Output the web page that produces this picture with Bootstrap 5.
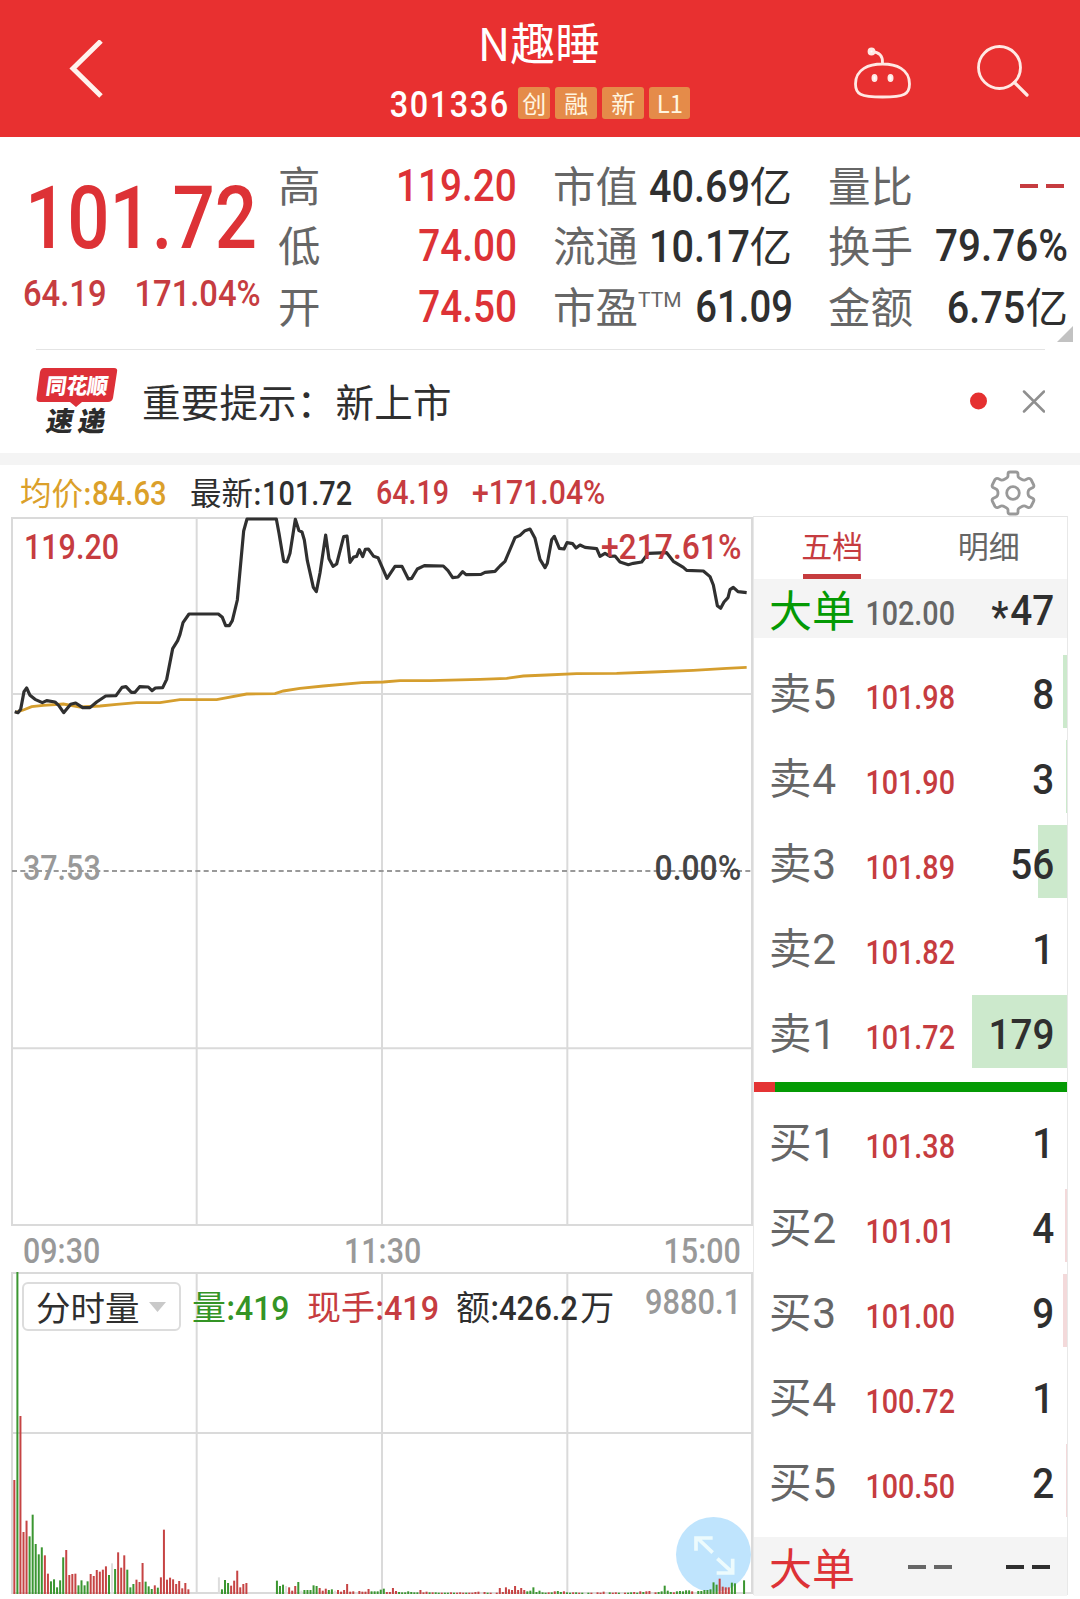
<!DOCTYPE html>
<html lang="zh-CN">
<head>
<meta charset="utf-8">
<meta name="viewport" content="width=device-width, initial-scale=1">
<title>N趣睡 301336</title>
<link href="https://cdn.jsdelivr.net/npm/bootstrap@5.3.0/dist/css/bootstrap.min.css" rel="stylesheet">
<style>
:root{--up:#dd3236;--up2:#c63c40;--ink:#2f2f2f;--dim:#666;--line:#dadada}
body{width:1080px;height:1599px;overflow:hidden;background:#fff;color:var(--ink);font-family:Roboto,"Noto Sans CJK SC",sans-serif;line-height:1}
svg{display:block}
.cjk{font-family:"Noto Sans CJK SC",sans-serif}
/* condensed numerals; nr keeps the right edge, nl the left edge */
.nr,.nl{display:inline-block;font-family:Roboto,sans-serif;font-weight:500;transform:scaleX(.91);transform-origin:100% 50%;white-space:nowrap}
.nl{transform-origin:0 50%}
.up{color:var(--up)}.up2{color:var(--up2)}.dim{color:var(--dim)}.pale{color:#999}

.topbar{height:137px;background:#e83030;color:#fff;padding:0 50px 0 68px}
.topbar .side{width:180px}
.topbar .side.first{width:160px}
.ttl{font-size:45px;line-height:50px;margin-top:17px}
.code{font-size:36.5px;letter-spacing:1.7px;line-height:34px;margin:4px 4px 0 -13px;transform:scaleX(.89)}
.tag{height:32px;border-radius:3px;background:#e58b49;color:#fff6e0;font:400 24px/32px "Noto Sans CJK SC",sans-serif;width:42px;text-align:center}

.quote{height:212px;padding-top:19px}
.bigcol{width:278px}
.big{font-size:86.5px;line-height:86px;padding-left:25px;margin-top:20px}
.big .nl{transform:scaleX(.86)}
.subs{font-size:37px;padding:0 17px 0 23px;margin-top:13px}
.subs .nl,.subs .nr{transform:scaleX(.885)}
.qcol{font-size:42.5px}
.qrow{height:60.4px;white-space:nowrap}
.qrow .nr{font-size:43.5px;padding-top:1px}
.qrow .cjk{margin-top:-4px}
.qrow.red .nr{transform:scaleX(.89)}
.dash2{display:flex;gap:8px}
.dash2 i{width:18px;height:4px;background:currentColor}
.ttm{font-size:21px;font-weight:400;align-self:flex-start;margin-top:13px}
.corner{position:absolute;right:7px;bottom:7px;border:8px solid transparent;border-right-color:#c2c2c2;border-bottom-color:#c2c2c2}
.rule{height:1px;background:#e4e4e4;margin:0 35px 0 36px}
.notice{height:103px;padding:0 35px 0 36px}
.notice .msg{font-size:38.5px;letter-spacing:.2px;margin-left:24px;margin-top:-3px}
.band{height:12px;background:#f4f4f4}
.info{height:52px;font-size:31.5px;padding:4px 43px 0 20px}
.info .nl{font-size:32.5px}
.left{width:753px;padding-left:11px}
.pricebox{height:709px;position:relative}
.volbox{height:322px;position:relative}
.pricebox>svg,.volbox>svg{position:absolute;left:0;top:0}
.lay{position:relative}
.axis{height:46px;font-size:35px}
.axis .nl,.axis .nr,.lab .nl{transform:scaleX(.87)}
.lab{font-size:35px}
.pick{width:159px;height:49px;border:2px solid #dcdcdc;border-radius:6px;background:#fff;font-size:34.5px;margin-left:11px;padding-left:12px}
.fab{position:absolute;left:665px;top:245px;width:75px;height:75px;border-radius:50%;background:#bfe4fd}
.book{width:315px;border:1px solid #e8e8e8;border-top-color:#e4e4e4;margin-top:-1px;height:1079px}
.tabz{height:62px;font-size:31px}
.tabz>div{width:50%;text-align:center;line-height:55px}
.tabz .on span{display:inline-block;height:62px;border-bottom:5px solid #c63c3e;width:58px;text-indent:-2px;white-space:nowrap}
.bigrow{height:59px;background:#f4f4f4;padding:0 13px 0 15px}
.bigrow .c1{font-size:43px}
.bigrow .c1.down{color:#049a04}
.bigrow .c1.rise{color:var(--up)}
.bigrow .c2{padding-top:9px}.bigrow .c3{padding-top:5px}
.lv{height:85px;padding:6px 0;position:relative}
.lv .in{position:relative;height:73px;padding:0 13px 0 15px;line-height:79px}
.lv .bar{position:absolute;right:0;top:6px;height:73px}
.c1{width:99px;font-size:42.5px;white-space:nowrap;color:var(--dim)}
.lv .c1{letter-spacing:.8px}
.c2{width:87px;text-align:right;font-size:33px}
.lv .c2{padding-top:3px}
.c2 .nr,.c3 .nr{float:right}
.c2 .nr{transform:scaleX(.87)}
.c3{font-size:42.5px;text-align:right}
.split{height:10px;background:#049a04;margin:8px 0 6px}
.split div{height:10px;width:21px;background:#e43434}
</style>
</head>
<body>
<header class="topbar d-flex justify-content-between">
  <div class="side first pt-4"><svg class="mt-3" width="40" height="60" viewBox="0 0 40 60" fill="none" stroke="#fff3ee" stroke-width="5"><path d="M33 1 5 28.500 33 56"/></svg></div>
  <div class="d-flex flex-column align-items-center">
    <div class="ttl cjk">N趣睡</div>
    <div class="d-flex align-items-center mt-auto" style="gap:5px;margin-bottom:15px">
      <span class="nr code">301336</span><span class="tag" style="width:32px">创</span><span class="tag">融</span><span class="tag">新</span><span class="tag" style="width:41px">L1</span>
    </div>
  </div>
  <div class="side d-flex justify-content-end">
    <svg width="180" height="137" viewBox="850 0 180 137" fill="none" stroke="#ffe9e4" stroke-width="2.8" stroke-linecap="round">
      <path d="M882.500 64C896 64 909.500 69 909.500 84C909.500 94 905 97 882.500 97S855.500 94 855.500 84C855.500 69 869 64 882.500 64ZM882.500 63C883 56 879 52 872 51.500"/>
      <circle cx="871.500" cy="51.500" r="2.500" fill="#fff"/><ellipse cx="874.500" cy="78" rx="2" ry="3" fill="#fff" stroke-width="2"/><ellipse cx="890.500" cy="78" rx="2" ry="3" fill="#fff" stroke-width="2"/>
      <circle cx="999.500" cy="67.500" r="21"/><path d="M1014.500 82.500 1027 95" stroke-width="3.200"/>
    </svg>
  </div>
</header>

<section class="quote d-flex position-relative">
  <div class="bigcol up">
    <div class="big"><span class="nl">101.72</span></div>
    <div class="subs up2 d-flex justify-content-between"><span class="nl">64.19</span><span class="nr">171.04%</span></div>
  </div>
  <div class="qcol" style="width:239px">
    <div class="qrow red d-flex align-items-center justify-content-between"><span class="dim cjk">高</span><span class="nr up">119.20</span></div>
    <div class="qrow red d-flex align-items-center justify-content-between"><span class="dim cjk">低</span><span class="nr up">74.00</span></div>
    <div class="qrow red d-flex align-items-center justify-content-between"><span class="dim cjk">开</span><span class="nr up">74.50</span></div>
  </div>
  <div class="qcol" style="width:239px;margin-left:36px">
    <div class="qrow d-flex align-items-center justify-content-between"><span class="dim cjk">市值</span><span><span class="nr">40.69</span><span class="cjk">亿</span></span></div>
    <div class="qrow d-flex align-items-center justify-content-between"><span class="dim cjk">流通</span><span><span class="nr">10.17</span><span class="cjk">亿</span></span></div>
    <div class="qrow d-flex align-items-center"><span class="dim cjk">市盈</span><span class="ttm dim">TTM</span><span class="nr ms-auto" style="transform:scaleX(.88);margin-right:-1px">61.09</span></div>
  </div>
  <div class="qcol" style="width:240px;margin-left:36px">
    <div class="qrow d-flex align-items-center justify-content-between"><span class="dim cjk">量比</span><span class="dash2 up2" style="padding-right:4px"><i></i><i></i></span></div>
    <div class="qrow d-flex align-items-center justify-content-between"><span class="dim cjk">换手</span><span class="nr" style="transform:scaleX(.93)">79.76%</span></div>
    <div class="qrow d-flex align-items-center justify-content-between"><span class="dim cjk">金额</span><span><span class="nr">6.75</span><span class="cjk">亿</span></span></div>
  </div>
  <div class="corner"></div>
</section>
<div class="rule"></div>
<section class="notice d-flex align-items-center">
  <svg width="82" height="76" viewBox="0 -3 82 76" font-family="'Noto Sans CJK SC',sans-serif" font-weight="900">
    <path d="M8 1H78Q82 1 81 5L77 31Q76 35 72 35H46L40 40 34 35H4Q0 35 0.500 31L4 5Q5 1 8 1Z" fill="#dd3038"/>
    <text transform="translate(9 26.500) skewX(-8)" font-size="22" textLength="62" lengthAdjust="spacingAndGlyphs" fill="#fff">同花顺</text>
    <text transform="translate(9 64) skewX(-10)" font-size="27" textLength="59" fill="#2c2c2c">速递</text>
  </svg>
  <div class="msg cjk">重要提示：新上市</div>
  <svg class="ms-auto" width="78" height="26" viewBox="0 0 78 26"><circle cx="11.500" cy="12" r="8.500" fill="#e53030"/><path d="M57 2.500 77 22.500M77 2.500 57 22.500" stroke="#8f8f8f" stroke-width="2.500" stroke-linecap="round"/></svg>
</section>
<div class="band"></div>
<section class="info d-flex align-items-center">
  <span style="color:#dba02a;width:170px" class="text-nowrap"><span class="cjk">均价:</span><span class="nl" style="transform:scaleX(.9)">84.63</span></span>
  <span style="width:186px" class="text-nowrap"><span class="cjk">最新:</span><span class="nl" style="transform:scaleX(.89)">101.72</span></span>
  <span style="width:96px" class="up2"><span class="nl" style="transform:scaleX(.88)">64.19</span></span>
  <span class="up2"><span class="nl" style="transform:scaleX(.93)">+171.04%</span></span>
  <svg class="ms-auto" width="48" height="48" viewBox="-24 -24 48 48" fill="none" stroke="#999" stroke-width="2.800" stroke-linejoin="round"><path d="M-5 -19Q-5 -21 -3 -21H3Q5 -21 5 -19V-17Q5 -15.500 8 -14Q10.500 -12.500 12 -13L15 -14.500Q17 -15 18 -13.500L20.500 -8.500Q21.500 -6.500 20 -5.500L17 -4Q15 -3 15 0Q15 3 17 4L20 5.500Q21.500 6.500 20.500 8.500L18 13.500Q17 15 15 14.500L12 13Q10.500 12.500 8 14Q5 15.500 5 17V19Q5 21 3 21H-3Q-5 21 -5 19V17Q-5 15.500 -8 14Q-10.500 12.500 -12 13L-15 14.500Q-17 15 -18 13.500L-20.500 8.500Q-21.500 6.500 -20 5.500L-17 4Q-15 3 -15 0Q-15 -3 -17 -4L-20 -5.500Q-21.500 -6.500 -20.500 -8.500L-18 -13.500Q-17 -15 -15 -14.500L-12 -13Q-10.500 -12.500 -8 -14Q-5 -15.500 -5 -17Z"/><circle r="6.300"/></svg>
</section>

<main class="d-flex">
  <div class="left">
    <div class="pricebox">
      <svg width="743" height="709" viewBox="33 51 2229 2127" fill="none">
        <path d="M36 54H2256V2175H36ZM590 54V2175M1146 54V2175M1702 54V2175M36 582H2256M36 1645H2256" stroke="#dadada" stroke-width="6"/>
        <path d="M36 1113H2256" stroke="#999" stroke-width="5.500" stroke-dasharray="15 10"/>
        <path d="M46 637 70 630 95 620 130 616 190 612 240 621 300 618 350 613 410 608 480 608 540 599 650 599 740 582 825 581 850 573 900 565 970 558 1085 548 1150 546 1200 542 1290 542 1440 538 1520 535 1570 528 1640 525 1730 521 1850 520 1960 516 2080 511 2180 505 2240 502" stroke="#d59e2e" stroke-width="8.500"/>
        <path d="M44 635 54 638 62 628 72 575 80 564 90 586 105 598 127 608 140 602 165 606 176 616 191 638 212 613 227 609 248 623 270 623 290 606 317 588 348 587 366 562 378 560 394 577 405 577 419 560 445 561 456 572 466 564 488 563 500 538 518 446 533 422 540 403 549 368 567 342 655 342 667 352 677 377 688 377 697 362 712 300 731 93 741 57 829 57 837 100 851 184 861 186 870 160 886 58 897 92 906 96 913 120 922 182 940 262 949 275 960 219 977 105 987 176 999 199 1010 192 1031 110 1041 108 1050 187 1061 171 1070 169 1078 149 1088 170 1096 148 1105 147 1121 169 1134 173 1161 235 1185 199 1206 199 1225 237 1235 235 1252 207 1273 197 1330 198 1344 212 1358 233 1374 231 1388 215 1398 224 1443 223 1455 217 1485 214 1500 198 1515 184 1545 113 1560 106 1575 92 1590 87 1605 115 1620 178 1635 203 1642 190 1655 119 1663 109 1678 145 1692 147 1701 128 1718 131 1728 144 1740 135 1755 142 1790 146 1800 169 1815 160 1830 169 1845 168 1860 186 1885 194 1900 190 1925 186 1945 160 2000 158 2020 184 2050 202 2060 211 2110 213 2130 230 2140 255 2152 317 2162 325 2172 306 2184 293 2190 269 2200 262 2214 275 2240 278" stroke="#303030" stroke-width="9.500" stroke-linejoin="round"/>
      </svg>
      <div class="lay">
        <div class="d-flex justify-content-between lab up2" style="padding:13px 12px 0 13px"><span class="nl">119.20</span><span class="nr">+217.61%</span></div>
        <div class="d-flex justify-content-between lab" style="padding:286px 12px 0 12px"><span class="nl pale">37.53</span><span class="nr" style="color:#444">0.00%</span></div>
      </div>
    </div>
    <div class="axis d-flex justify-content-between align-items-center pale" style="padding:5px 12px 0 12px"><span class="nl">09:30</span><span class="nl" style="margin-left:12px">11:30</span><span class="nr">15:00</span></div>
    <div class="volbox">
      <div class="fab"></div>
      <svg width="743" height="322" viewBox="33 186 2229 966" fill="none">
        <path d="M36 189H2256V1149H36ZM590 189V1149M1146 189V1149M1702 189V1149M36 669H2256" stroke="#dadada" stroke-width="6"/>
        <g id="bars"></g>
        <path d="M2138 1028 2092 984M2088 1022V984H2138M2152 1046 2198 1088M2150 1089H2198V1046" stroke="#edfbfd" stroke-width="11"/>
      </svg>
      <div class="lay d-flex align-items-center" style="padding-top:10px;font-size:34px">
        <div class="pick d-flex align-items-center cjk"><span>分时量</span><svg class="ms-2" width="19" height="12"><path d="M1 1H18L9.500 11Z" fill="#c9c9c9"/></svg></div>
        <span class="text-nowrap" style="color:#349425;margin-left:11px;width:115px"><span class="cjk">量:</span><span class="nl" style="transform:scaleX(.94)">419</span></span>
        <span class="text-nowrap up2" style="width:149px"><span class="cjk">现手:</span><span class="nl" style="transform:scaleX(.95)">419</span></span>
        <span class="text-nowrap" style="width:160px"><span class="cjk">额:</span><span class="nl" style="margin-right:-6px">426.2</span><span class="cjk">万</span></span>
        <span class="nr pale ms-auto" style="font-size:35px;margin-right:12px;margin-top:-8px;transform:scaleX(.88)">9880.1</span>
      </div>
    </div>
  </div>
  <aside class="book">
    <div class="tabz d-flex cjk"><div class="on up2"><span>五档</span></div><div class="dim">明细</div></div>
    <div class="bigrow d-flex align-items-center"><span class="c1 down cjk">大单</span><span class="c2 dim"><span class="nr">102.00</span></span><span class="c3 ms-auto"><span class="nr"><span style="position:relative;top:6px;margin-right:2px">*</span>47</span></span></div>
    <div id="sell" style="padding-top:11px"></div>
    <div class="split"><div></div></div>
    <div id="buy"></div>
    <div class="bigrow d-flex align-items-center" style="margin-top:14px"><span class="c1 rise cjk">大单</span><span class="dash2 dim" style="margin-left:40px"><i></i><i></i></span><span class="dash2 ms-auto me-1"><i></i><i></i></span></div>
  </aside>
</main>
<script>
const level = color => ([name, price, qty, w]) =>
  `<div class="lv"><div class="bar" style="width:${w}px;background:${color}"></div><div class="in d-flex"><span class="c1">${name}</span><span class="c2 up2"><span class="nr">${price}</span></span><span class="c3 ms-auto"><span class="nr">${qty}</span></span></div></div>`;
document.getElementById('sell').innerHTML = [['卖5','101.98',8,4],['卖4','101.90',3,1],['卖3','101.89',56,29],['卖2','101.82',1,0],['卖1','101.72',179,95]].map(level('#cce9cc')).join('');
document.getElementById('buy').innerHTML = [['买1','101.38',1,0],['买2','101.01',4,2],['买3','101.00',9,4],['买4','100.72',1,0],['买5','100.50',2,1]].map(level('#f3d9da')).join('');

// per-minute volume: r = up, g = down, w = flat; "_n" skips n minutes
const vol = `r342 g966 r534 r186 r220 g173 g238 g150 g119 g140 r116 r61 g38 g44 g20 g41 g110 r132 r57 r60 r61 g26 g41 g26 g38 r60 r54 r72 r67 r73 r83 g57 w92 g75 r125 r79 r116 g73 g20 g30 r43 r36 r93 g37 g23 g15 r26 g19 r50 r193 r43 r49 r44 r30 r39 r17 r33 r14 _9
w50 g14 g42 g33 r25 r40 r70 r20 r30 r33 _9 g40 g24 g28 w24 r20 r10 r24 g36 w10 g12 g12 g12 g26 g24 r18 r10 r16 g12 g14 w10 r12 r7 r12 r30 r7 r8 w6 r9 r7 r7 r15 g8 g8 g8
g13 g16 r6 r6 r18 r9 g6 g5 g5 g8 g6 g5 g5 r12 r5 r7 g5 r5 g5 g4 r4 g4 g4 r5 g4 r4 r5 r4 g4 r4 r4 r6 r7 w4 r6 g4 r4 w4 r4 r18 r6 r20 r14 r12 r24 r12 r18 r12 g8 g10 g20 g6 g10 g5 g4 r5 g5 r8 g9 g6 r8 g5 g4 r5 g5 r4 g4 w3 g4 r4 w3 r5 r4 r7 w3 g5 r4 r5 g4 w3 r4 g4 g5 r6 g4 r8 g6 r8 r9 w3 r5 g6 g8 g25 g10 g6 r5 g8 g9 g8 g11 g11 r8 w5 g9 g9 g12 g12 g14 g35 g28 r46 r22 r20 r20 g34 g32 _2 g41`.split(/\s+/);
const tone = {r:'#c64444', g:'#3b9631', w:'#ddd'};
let i = 0, out = '';
for (const v of vol) {
  const n = +v.slice(1);
  if (v[0] === '_') { i += n; continue; }
  out += `<rect x="${(40 + i * 9.16).toFixed(1)}" y="${1152 - n}" width="6" height="${n}" fill="${tone[v[0]]}"/>`;
  i++;
}
document.getElementById('bars').innerHTML = out;
</script>
<script src="https://cdn.jsdelivr.net/npm/bootstrap@5.3.0/dist/js/bootstrap.bundle.min.js"></script>
</body>
</html>
